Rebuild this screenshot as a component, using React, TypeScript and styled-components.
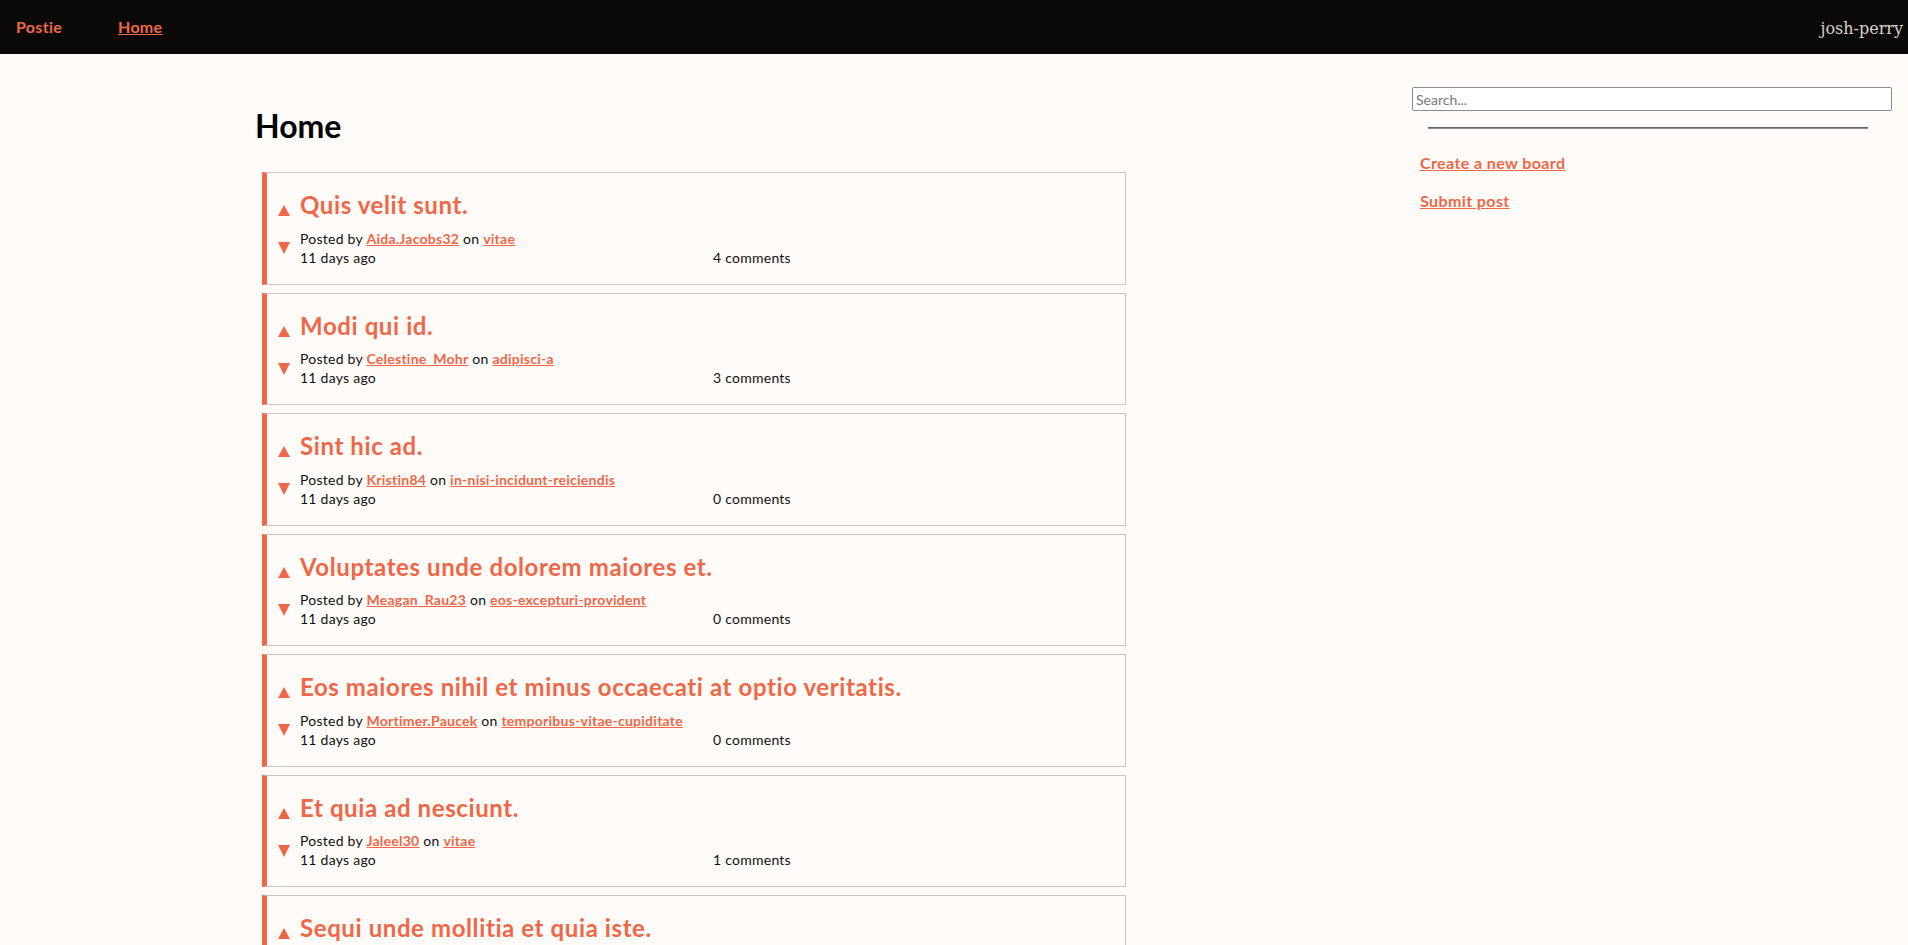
import React from "react";
import styled, { createGlobalStyle } from "styled-components";

const accent = "#ef6747";

const GlobalStyle = createGlobalStyle`
  html, body {
    margin: 0;
    padding: 0;
    background: #fffbf8;
    overflow: hidden;
  }
  body {
    font-family: "Lato", "Noto Sans", sans-serif;
    color: #111;
  }
`;

const Page = styled.div`
  min-height: 100vh;
  background: #fffbf8;
`;

const NavBar = styled.nav`
  height: 54px;
  background: #0b0907;
  display: flex;
  align-items: center;
  padding: 0 5px 0 16px;
`;

const Brand = styled.a`
  color: ${accent};
  font-weight: 700;
  font-size: 16px;
  letter-spacing: 0.3px;
  text-decoration: none;
  width: 102px;
  margin-top: -1px;
`;

const NavLink = styled.a`
  color: ${accent};
  font-weight: 700;
  font-size: 16px;
  letter-spacing: 0.3px;
  text-decoration: underline;
  margin-top: -1px;
`;

const UserName = styled.span`
  margin-left: auto;
  font-family: "DejaVu Serif", serif;
  font-size: 16px;
  color: #d6d2cb;
  margin-top: 2px;
`;

const Body = styled.div`
  display: flex;
  align-items: flex-start;
`;

const Main = styled.main`
  flex: 1;
  padding: 50px 0 0 255px;
`;

const Heading = styled.h1`
  margin: 0 0 24px;
  font-size: 32px;
  line-height: 44px;
  font-weight: 700;
  color: #000;
`;

const PostList = styled.div`
  display: flex;
  flex-direction: column;
  gap: 8px;
  margin-left: 7px;
  width: 864px;
`;

const Card = styled.article`
  display: flex;
  gap: 10px;
  border: 1px solid #c9c6c3;
  border-left: 5px solid ${accent};
  padding: 16px 0 17px 11px;
`;

const Votes = styled.div`
  display: flex;
  flex-direction: column;
  gap: 26px;
  padding-top: 16px;
  width: 12px;
  flex-shrink: 0;
`;

const Arrow = styled.svg`
  display: block;
  fill: ${accent};
`;

const Content = styled.div`
  flex: 1;
  min-width: 0;
`;

const Title = styled.h2`
  margin: 0 0 7px;
  font-size: 24px;
  line-height: 32.5px;
  font-weight: 700;
  letter-spacing: 0.6px;
  color: ${accent};
`;

const Meta = styled.div`
  font-size: 14px;
  line-height: 19px;
  letter-spacing: 0.25px;
`;

const MetaLink = styled.a`
  color: ${accent};
  font-weight: 700;
  text-decoration: underline;
`;

const MetaRow = styled.div`
  display: grid;
  grid-template-columns: 413px auto;
  font-size: 14px;
  line-height: 19px;
  letter-spacing: 0.25px;
`;

const Sidebar = styled.aside`
  width: 480px;
  margin-right: 16px;
  padding-top: 33px;
  display: flex;
  flex-direction: column;
`;

const SearchInput = styled.input`
  box-sizing: border-box;
  width: 480px;
  height: 24px;
  border: 1px solid #8b8a96;
  border-radius: 2px;
  background: #fff;
  padding: 1px 3px;
  font-family: "Lato", sans-serif;
  font-size: 14px;
  color: #222;
  outline: none;

  &::placeholder {
    color: #777;
  }
`;

const Divider = styled.hr`
  width: 440px;
  margin: 16px 0 0 16px;
  border: none;
  border-top: 1px solid #666;
  border-bottom: 1px solid #8a8a8a;
`;

const SideLinks = styled.div`
  display: flex;
  flex-direction: column;
  gap: 16px;
  padding: 23px 0 0 8px;
`;

const SideLink = styled.a`
  color: ${accent};
  font-weight: 700;
  font-size: 16px;
  line-height: 22px;
  letter-spacing: 0.4px;
  text-decoration: underline;
`;

interface IPost {
  id: number;
  title: string;
  author: string;
  board: string;
  comments: number;
}

const posts: IPost[] = [
  { id: 1, title: "Quis velit sunt.", author: "Aida.Jacobs32", board: "vitae", comments: 4 },
  { id: 2, title: "Modi qui id.", author: "Celestine_Mohr", board: "adipisci-a", comments: 3 },
  { id: 3, title: "Sint hic ad.", author: "Kristin84", board: "in-nisi-incidunt-reiciendis", comments: 0 },
  { id: 4, title: "Voluptates unde dolorem maiores et.", author: "Meagan_Rau23", board: "eos-excepturi-provident", comments: 0 },
  { id: 5, title: "Eos maiores nihil et minus occaecati at optio veritatis.", author: "Mortimer.Paucek", board: "temporibus-vitae-cupiditate", comments: 0 },
  { id: 6, title: "Et quia ad nesciunt.", author: "Jaleel30", board: "vitae", comments: 1 },
  { id: 7, title: "Sequi unde mollitia et quia iste.", author: "Lorna.Koss", board: "vitae", comments: 2 },
];

const UpArrow = () => (
  <Arrow width="12" height="11" viewBox="0 0 12 11">
    <polygon points="6,0 12,11 0,11" />
  </Arrow>
);

const DownArrow = () => (
  <Arrow width="12" height="12" viewBox="0 0 12 12">
    <polygon points="0,0 12,0 6,12" />
  </Arrow>
);

const PostCard: React.FC<{ post: IPost }> = ({ post }) => (
  <Card>
    <Votes>
      <UpArrow />
      <DownArrow />
    </Votes>
    <Content>
      <Title>{post.title}</Title>
      <Meta>
        Posted by <MetaLink href="#">{post.author}</MetaLink> on{" "}
        <MetaLink href="#">{post.board}</MetaLink>
      </Meta>
      <MetaRow>
        <span>11 days ago</span>
        <span>{post.comments} comments</span>
      </MetaRow>
    </Content>
  </Card>
);

export default function App() {
  return (
    <Page>
      <GlobalStyle />
      <NavBar>
        <Brand href="#">Postie</Brand>
        <NavLink href="#">Home</NavLink>
        <UserName>josh-perry</UserName>
      </NavBar>
      <Body>
        <Main>
          <Heading>Home</Heading>
          <PostList>
            {posts.map((p) => (
              <PostCard key={p.id} post={p} />
            ))}
          </PostList>
        </Main>
        <Sidebar>
          <SearchInput placeholder="Search..." />
          <Divider />
          <SideLinks>
            <SideLink href="#">Create a new board</SideLink>
            <SideLink href="#">Submit post</SideLink>
          </SideLinks>
        </Sidebar>
      </Body>
    </Page>
  );
}
